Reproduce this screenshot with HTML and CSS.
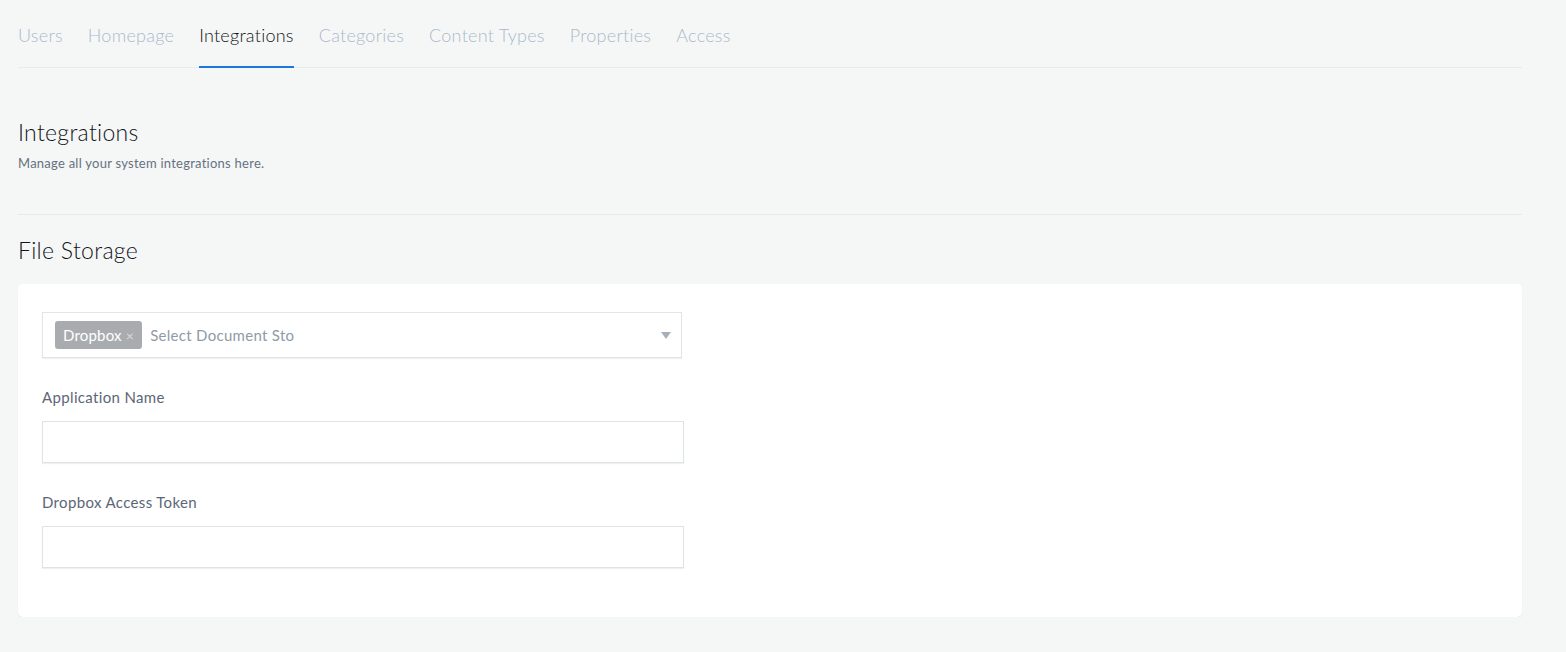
FILE: index.html
```html
<!DOCTYPE html>
<html lang="en">
<head>
    <meta charset="UTF-8">
    <title>Settings - Integrations</title>
    <link rel="stylesheet" href="styles.css">
</head>
<body>
    <div class="page">
        <!-- settings tabs -->
        <nav class="tabs">
            <a class="tab" href="#">Users</a>
            <a class="tab" href="#">Homepage</a>
            <a class="tab active" href="#">Integrations</a>
            <a class="tab" href="#">Categories</a>
            <a class="tab" href="#">Content Types</a>
            <a class="tab" href="#">Properties</a>
            <a class="tab" href="#">Access</a>
        </nav>

        <div class="intro">
            <h1>Integrations</h1>
            <p>Manage all your system integrations here.</p>
        </div>

        <h2>File Storage</h2>
        <div class="card">
            <div class="multi-select">
                <span class="tag">Dropbox <span class="tag-x">&times;</span></span>
                <span class="placeholder">Select Document Sto</span>
                <span class="arrow"></span>
            </div>

            <div class="form-group">
                <label for="appName">Application Name</label>
                <input type="text" id="appName">
            </div>

            <div class="form-group">
                <label for="token">Dropbox Access Token</label>
                <input type="text" id="token">
            </div>
        </div>
    </div>
</body>
</html>
```

FILE: styles.css
```css
body {
    margin: 0;
    background-color: #f5f7f7;
    font-family: Lato, "Liberation Sans", sans-serif;
    color: #111417;
}
.page {
    width: 1504px;
    margin-left: 18px;
}
.tabs {
    display: flex;
    gap: 25px;
    border-bottom: 1px solid #e8ebec;
    padding-top: 24px;
}
.tab {
    font-size: 18px;
    font-weight: 300;
    letter-spacing: 0.25px;
    color: #acb9cb;
    text-decoration: none;
    padding-bottom: 20px;
    border-bottom: 2px solid transparent;
    margin-bottom: -1px;
}
.tab.active {
    color: #111417;
    border-bottom-color: #1f74e0;
}
.intro {
    padding: 50px 0 43px;
    border-bottom: 1px solid #e6e9eb;
}
h1 {
    font-size: 23px;
    font-weight: 300;
    letter-spacing: 0.3px;
    margin: 0 0 9px;
}
.intro p {
    margin: 0;
    font-size: 13px;
    letter-spacing: 0.25px;
    color: #66717f;
}
h2 {
    font-size: 23px;
    font-weight: 300;
    letter-spacing: 0.3px;
    margin: 21px 0 20px;
}
.card {
    background: #fff;
    border-radius: 5px;
    box-shadow: 0 1px 1px rgba(0, 0, 0, 0.08);
    padding: 28px 24px 49px;
}
.multi-select {
    width: 640px;
    height: 46px;
    box-sizing: border-box;
    border: 1px solid #dfe6ea;
    box-shadow: 0 1px 1px rgba(0, 0, 0, 0.06);
    display: flex;
    align-items: center;
    padding-left: 12px;
    position: relative;
}
.tag {
    background: #a9acae;
    color: #fff;
    border-radius: 3px;
    font-size: 15px;
    letter-spacing: 0.2px;
    padding: 5px 8px;
}
.tag-x {
    color: #d9dbdc;
    font-size: 14px;
}
.placeholder {
    font-size: 15px;
    letter-spacing: 0.3px;
    color: #8f9aa7;
    margin-left: 8px;
}
.arrow {
    position: absolute;
    right: 10px;
    top: 19px;
    border-left: 5px solid transparent;
    border-right: 5px solid transparent;
    border-top: 7px solid #a6b0b8;
}
.form-group {
    margin-top: 30px;
}
label {
    display: block;
    font-size: 15px;
    letter-spacing: 0.35px;
    color: #5b6677;
    margin-bottom: 15px;
}
input {
    display: block;
    width: 642px;
    height: 42px;
    box-sizing: border-box;
    border: 1px solid #dce4e8;
    box-shadow: 0 1px 1px rgba(0, 0, 0, 0.06);
    background: #fff;
    margin: 0;
}
```
